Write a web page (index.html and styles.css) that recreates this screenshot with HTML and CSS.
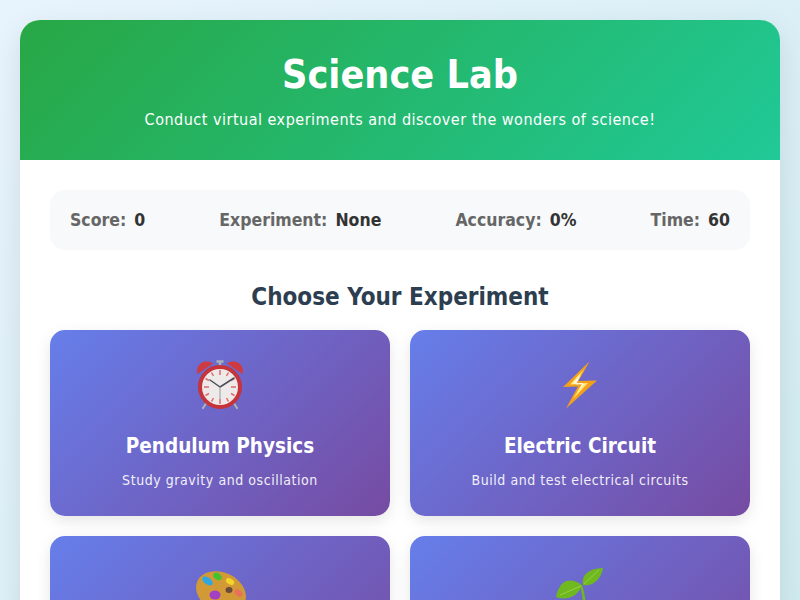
FILE: index.html
```html
<!DOCTYPE html>
<html lang="en">
  <head>
    <meta charset="UTF-8" />
    <title>Science Lab</title>
    <link rel="stylesheet" href="styles.css">
  </head>
  <body>
    <div class="container">
      <div class="header">
        <h1>Science Lab</h1>
        <p>Conduct virtual experiments and discover the wonders of science!</p>
      </div>
      <div class="content">
        <div class="stats">
          <div class="stat"><span class="stat-label">Score:</span><span class="stat-value">0</span></div>
          <div class="stat"><span class="stat-label">Experiment:</span><span class="stat-value">None</span></div>
          <div class="stat"><span class="stat-label">Accuracy:</span><span class="stat-value">0%</span></div>
          <div class="stat"><span class="stat-label">Time:</span><span class="stat-value">60</span></div>
        </div>
        <h2 class="section-title">Choose Your Experiment</h2>
        <div class="experiments">
          <div class="card">
            <svg class="card-icon" viewBox="0 0 60 60">
              <path d="M17 47l-4 6M43 47l4 6" stroke="#aab2b8" stroke-width="2.200" stroke-linecap="round" />
              <path d="M30 11V7M26.500 6.500h7" stroke="#a9b2b8" stroke-width="2.500" />
              <path d="M7.500 19C5 10 14 3 23 8.500z" fill="#cf3a40" />
              <path d="M52.500 19C55 10 46 3 37 8.500z" fill="#cf3a40" />
              <circle cx="30" cy="32" r="20" fill="#eeeaea" stroke="#c4343a" stroke-width="4" />
              <path d="M30 15v5M30 44v5M14 32h5M41 32h5M21.500 17.500l2 3.500M38.500 17.500l-2 3.500M15.500 23.500l3.500 2M44.500 23.500l-3.500 2M15.500 40.500l3.500-2M44.500 40.500l-3.500-2M21.500 46.500l2-3.500M38.500 46.500l-2-3.500" stroke="#e2686a" stroke-width="1.500" />
              <path d="M30 32L20 25M30 32l14-9" stroke="#4a4f57" stroke-width="1.500" stroke-linecap="round" />
              <path d="M30 32v12" stroke="#a3a7ab" stroke-width="1.200" />
            </svg>
            <h3>Pendulum Physics</h3>
            <p>Study gravity and oscillation</p>
          </div>
          <div class="card">
            <svg class="card-icon" viewBox="0 0 60 60">
              <path d="M39.500 6.500L13 32l15-.500L16 53.500 47 25.500l-18.500.500z" fill="#f4a11a" />
              <path d="M34 14L20 29.500l12-.500-9 15 15-16-13 .500z" fill="#ffe873" />
              <path d="M31 19L23 28.500l10-.500-6 9.500 7-8.500-8 .500z" fill="#ffffff" />
            </svg>
            <h3>Electric Circuit</h3>
            <p>Build and test electrical circuits</p>
          </div>
          <div class="card">
            <svg class="card-icon" viewBox="0 0 60 60">
              <ellipse cx="31" cy="31" rx="26" ry="19.500" transform="rotate(25 31 31)" fill="#d29a36" />
              <ellipse cx="17.500" cy="20" rx="6" ry="3.500" transform="rotate(35 17.500 20)" fill="#2fa8e0" />
              <ellipse cx="27.500" cy="15.500" rx="4.500" ry="3.200" transform="rotate(35 27.500 15.500)" fill="#3fc32f" />
              <ellipse cx="40" cy="20.500" rx="4.500" ry="2.800" transform="rotate(30 40 20.500)" fill="#f2d42a" />
              <ellipse cx="39" cy="29" rx="3.500" ry="3" fill="#6a4a3a" />
              <ellipse cx="48.500" cy="32" rx="4.500" ry="3" transform="rotate(40 48.500 32)" fill="#e8705c" />
              <ellipse cx="25" cy="34" rx="5.500" ry="4.500" fill="#a33fc4" />
            </svg>
            <h3>Color Mixing</h3>
            <p>Explore primary and secondary colors</p>
          </div>
          <div class="card">
            <svg class="card-icon" viewBox="0 0 60 60">
              <path d="M32 24c3 8 4.500 20 4 32h-3c.500-12-.500-23-3-31z" fill="#6fb820" />
              <path d="M33 24C31 14 38 8 53 6.700 52 16 44 26 33 24z" fill="#6fb820" />
              <path d="M32 24C26 19 16 17 11 24 8 28 6.700 32 6 36 16 40 28 36 32 24z" fill="#6fb820" />
              <path d="M34 23L49 9M31 25L10 34" stroke="#a3d64a" stroke-width="0.800" />
            </svg>
            <h3>Plant Growth</h3>
            <p>Observe how plants grow</p>
          </div>
        </div>
      </div>
    </div>
  </body>
</html>
```

FILE: styles.css
```css
* {
  margin: 0;
  padding: 0;
  box-sizing: border-box;
}

html, body {
  height: 600px;
  overflow: hidden;
}

body {
  font-family: "DejaVu Sans Condensed", "DejaVu Sans", sans-serif;
  background: linear-gradient(135deg, #e8f4fd, #d1ecf1);
  padding: 20px;
}

.container {
  background: white;
  border-radius: 20px;
  box-shadow: 0 10px 30px rgba(0, 0, 0, 0.1);
  overflow: hidden;
}

.header {
  background: linear-gradient(135deg, #28a745, #20c997);
  color: white;
  padding: 30px;
  text-align: center;
}

.header h1 {
  font-size: 39.2px;
  line-height: 50px;
  margin-bottom: 9px;
}

.header p {
  font-size: 16px;
  line-height: 21px;
  letter-spacing: 0.5px;
}

.content {
  padding: 30px;
}

.stats {
  display: flex;
  justify-content: space-between;
  background: #f8f9fa;
  border-radius: 15px;
  padding: 20px;
  margin-bottom: 30px;
}

.stat {
  display: flex;
  gap: 8px;
  font-size: 17.5px;
  font-weight: bold;
  line-height: 20px;
}

.stat-label {
  color: #666;
}

.stat-value {
  color: #333;
}

.section-title {
  font-size: 24px;
  line-height: 34px;
  color: #2c3e50;
  text-align: center;
  margin-bottom: 16px;
}

.experiments {
  display: grid;
  grid-template-columns: 1fr 1fr;
  gap: 20px;
}

.card {
  background: linear-gradient(135deg, #667eea, #764ba2);
  color: white;
  border-radius: 15px;
  padding: 25px;
  text-align: center;
  box-shadow: 0 5px 15px rgba(0, 0, 0, 0.1);
}

.card-icon {
  display: block;
  width: 60px;
  height: 60px;
  margin: 0 auto 15px;
}

.card h3 {
  font-size: 20.5px;
  line-height: 32px;
  margin-bottom: 7px;
}

.card p {
  font-size: 14px;
  line-height: 22px;
  letter-spacing: 0.55px;
  opacity: 0.9;
}
```
